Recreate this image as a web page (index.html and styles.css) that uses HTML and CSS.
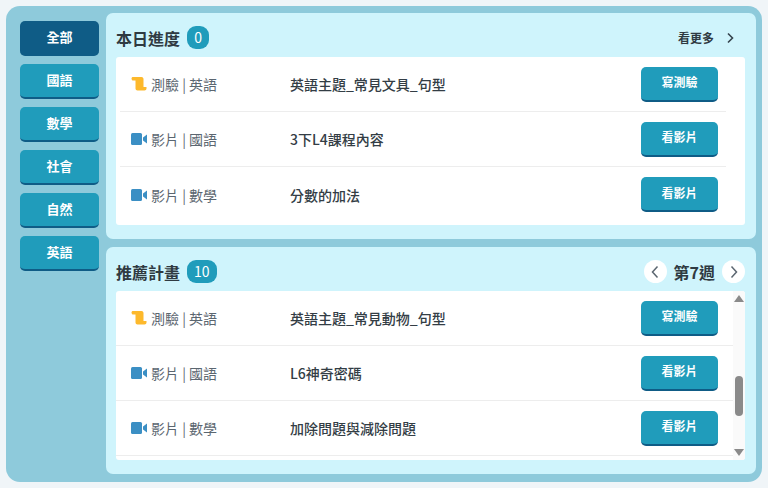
FILE: index.html
```html
<!DOCTYPE html>
<html lang="zh-Hant">
<head>
<meta charset="utf-8">
<title>學習</title>
<link rel="stylesheet" href="styles.css">
</head>
<body>
<svg class="defs" width="0" height="0" aria-hidden="true">
  <symbol id="quiz" viewBox="0 0 15 14"><path fill="#fdb92c" d="M0 1.5C0 .6.6 0 1.5 0H10c1.1 0 2 .9 2 2v8h3v1.5c0 1.2-.9 2-2 2H6c-1.1 0-2-.8-2-2V3.6H1.6C.8 3.6 0 2.6 0 1.5z"/></symbol>
  <symbol id="video" viewBox="0 0 16 12"><rect width="11" height="12" rx="1.5" fill="#3b8fc4"/><path fill="#3b8fc4" d="M12 4.5 16 1.5v9l-4-3z"/></symbol>
</svg>
<main class="app">
  <nav class="tabs">
    <button class="tab tab-active">全部</button>
    <button class="tab">國語</button>
    <button class="tab">數學</button>
    <button class="tab">社會</button>
    <button class="tab">自然</button>
    <button class="tab">英語</button>
  </nav>
  <div class="panels">
    <section class="panel">
      <header class="panel-head">
        <h2>本日進度</h2><span class="count">0</span>
        <a class="more">看更多<svg class="more-arrow" viewBox="0 0 10 12" width="10" height="12"><path d="M3 1.5 7.5 6 3 10.5" fill="none" stroke="#36434d" stroke-width="1.6"/></svg></a>
      </header>
      <div class="list">
        <div class="rows rows-wide">
          <div class="row"><span class="kind"><svg class="ic"><use href="#quiz"/></svg>測驗 | 英語</span><span class="name">英語主題_常見文具_句型</span><button class="act">寫測驗</button></div>
          <div class="row"><span class="kind"><svg class="ic"><use href="#video"/></svg>影片 | 國語</span><span class="name">3下L4課程內容</span><button class="act">看影片</button></div>
          <div class="row"><span class="kind"><svg class="ic"><use href="#video"/></svg>影片 | 數學</span><span class="name">分數的加法</span><button class="act">看影片</button></div>
        </div>
      </div>
    </section>
    <section class="panel">
      <header class="panel-head">
        <h2>推薦計畫</h2><span class="count">10</span>
        <div class="week">
          <span class="round"><svg viewBox="0 0 10 14" width="10" height="14"><path d="M7.5 1.5 2.5 7l5 5.5" fill="none" stroke="#5b6670" stroke-width="1.5"/></svg></span>
          <strong>第7週</strong>
          <span class="round"><svg viewBox="0 0 10 14" width="10" height="14"><path d="M2.5 1.5 7.5 7l-5 5.5" fill="none" stroke="#5b6670" stroke-width="1.5"/></svg></span>
        </div>
      </header>
      <div class="list list-scroll">
        <div class="rows">
          <div class="row"><span class="kind"><svg class="ic"><use href="#quiz"/></svg>測驗 | 英語</span><span class="name">英語主題_常見動物_句型</span><button class="act">寫測驗</button></div>
          <div class="row"><span class="kind"><svg class="ic"><use href="#video"/></svg>影片 | 國語</span><span class="name">L6神奇密碼</span><button class="act">看影片</button></div>
          <div class="row"><span class="kind"><svg class="ic"><use href="#video"/></svg>影片 | 數學</span><span class="name">加除問題與減除問題</span><button class="act">看影片</button></div>
        </div>
        <div class="scrollbar">
          <i class="arrow-up"></i>
          <i class="thumb"></i>
          <i class="arrow-down"></i>
        </div>
      </div>
    </section>
  </div>
</main>
</body>
</html>
```
FILE: styles.css
```css
* { box-sizing: border-box; }
html, body { height: 100%; }
body {
  margin: 0;
  padding: 6px;
  background: #f0f5f8;
  font-family: "Noto Sans CJK TC", "Noto Sans", sans-serif;
  color: #2f3a42;
  overflow: hidden;
}
.defs { position: absolute; }
.app {
  width: 756px;
  height: 476px;
  background: #8ecadb;
  border-radius: 14px;
  padding: 7px 6px 8px 14px;
  display: flex;
  gap: 7px;
}
.tabs {
  width: 79px;
  padding-top: 8px;
  display: flex;
  flex-direction: column;
  gap: 8px;
  flex: none;
}
.tab {
  height: 35px;
  border: 0;
  border-bottom: 2px solid #0f5c86;
  border-radius: 5px;
  background: #209cbb;
  color: #fff;
  font: 700 13px/1 "Noto Sans CJK TC", sans-serif;
  padding: 0 0 2px;
}
.tab-active { background: #0f5c86; }
.panels {
  flex: 1;
  display: flex;
  flex-direction: column;
  gap: 8px;
}
.panel {
  height: 226px;
  background: #cff4fc;
  border-radius: 7px;
  padding: 0 11px 14px 10px;
  display: flex;
  flex-direction: column;
}
.panel + .panel { height: 227px; }
.panel-head {
  height: 44px;
  display: flex;
  align-items: center;
  padding-top: 5px;
  flex: none;
}
.panel-head h2 {
  margin: 0 7px 0 0;
  font-size: 16px;
  font-weight: 700;
  line-height: 1;
}
.count {
  min-width: 22px;
  height: 23px;
  padding: 0 7px;
  border-radius: 9px;
  background: #209cbb;
  color: #fff;
  font-size: 14px;
  line-height: 23px;
  text-align: center;
}
.more {
  margin-left: auto;
  margin-right: 10px;
  display: flex;
  align-items: center;
  gap: 11px;
  font-size: 12px;
  font-weight: 700;
}
.week {
  margin-left: auto;
  display: flex;
  align-items: center;
  gap: 7px;
  font-size: 16px;
}
.week strong { font-weight: 700; }
.round {
  width: 23px;
  height: 23px;
  border-radius: 50%;
  background: #fff;
  display: flex;
  align-items: center;
  justify-content: center;
}
.list {
  flex: 1;
  background: #fff;
  border-radius: 3px;
  display: flex;
  overflow: hidden;
  min-height: 0;
}
.rows { flex: 1; padding: 0 0 0 0; }
.rows-wide { padding: 0 19px 0 4px; }
.row {
  height: 55px;
  border-bottom: 1px solid #ededed;
  display: flex;
  align-items: center;
  padding-right: 15px;
  font-size: 14px;
}
.rows-wide .row { padding-right: 8px; }
.rows-wide .row:last-child { border-bottom: 0; }
.kind {
  width: 174px;
  padding-left: 15px;
  display: flex;
  align-items: center;
  color: #5b6670;
  white-space: pre;
  flex: none;
}
.rows-wide .kind { padding-left: 11px; width: 170px; }
.ic { width: 16px; height: 14px; margin-right: 4px; flex: none; }
.name { flex: 1; font-weight: 500; color: #333d45; }
.act {
  width: 77px;
  height: 35px;
  border: 0;
  border-bottom: 2px solid #0f5c86;
  border-radius: 5px;
  background: #209cbb;
  color: #fff;
  font: 700 12px/1 "Noto Sans CJK TC", sans-serif;
  padding: 0 0 2px;
  flex: none;
}
.scrollbar {
  width: 12px;
  flex: none;
  background: #fafafa;
  position: relative;
  display: flex;
  flex-direction: column;
  align-items: center;
  justify-content: space-between;
  padding: 4px 0;
}
.arrow-up { width: 0; height: 0; border: 5px solid transparent; border-top: 0; border-bottom: 7px solid #8a8a8a; }
.arrow-down { width: 0; height: 0; border: 5px solid transparent; border-bottom: 0; border-top: 7px solid #8a8a8a; }
.thumb {
  position: absolute;
  left: 2px;
  top: 85px;
  width: 8px;
  height: 40px;
  border-radius: 4px;
  background: #8a8a8a;
}
```
